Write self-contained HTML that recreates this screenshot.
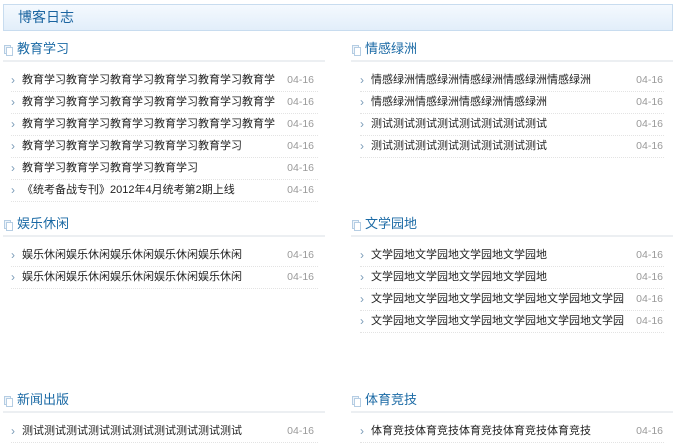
<!DOCTYPE html>
<html><head><meta charset="utf-8"><style>
*{margin:0;padding:0;box-sizing:border-box}
body{width:677px;height:442px;overflow:hidden;background:#fff;font-family:"Liberation Sans","Noto Sans CJK SC",sans-serif;position:relative}
.hd{position:absolute;left:3px;top:4px;width:670px;height:27px;border:1px solid #c8dcef;background:linear-gradient(#f4f9fe,#e2eefa);color:#1a64a0;font-size:14px;line-height:25px;padding-left:14px}
.sec{position:absolute}
.t{height:25px;border-bottom:2px solid #eceff2;font-size:13px;color:#1b6aa5;line-height:24px;padding-left:14px;position:relative}
.t:before{content:"";position:absolute;left:1px;top:8px;width:5px;height:7px;border:1px solid #b5cde3;background:#eef4fa}
.t:after{content:"";position:absolute;left:3px;top:10px;width:5px;height:7px;border:1px solid #b5cde3;background:#fff}
ul{list-style:none;margin-top:8px}
li{height:22px;line-height:21px;font-size:11px;color:#222;border-bottom:1px dotted #e3e3e3;position:relative;padding-left:11px;white-space:nowrap}
li:before{content:"›";position:absolute;left:0;top:0;color:#7a9bb8;font-size:12px}
li b{font-weight:normal;display:block;width:256px;overflow:hidden}
li span{position:absolute;right:4px;top:0;color:#999;font-size:10.5px}
.L{left:3px;width:322px}.L ul{margin-left:8px;width:307px}
.R{left:351px;width:322px}.R ul{margin-left:9px;width:304px}
.R li span{right:1px}
</style></head><body>
<div class="hd">博客日志</div>

<div class="sec L" style="top:37px"><div class="t">教育学习</div><ul>
<li><b>教育学习教育学习教育学习教育学习教育学习教育学</b><span>04-16</span></li>
<li><b>教育学习教育学习教育学习教育学习教育学习教育学</b><span>04-16</span></li>
<li><b>教育学习教育学习教育学习教育学习教育学习教育学</b><span>04-16</span></li>
<li><b>教育学习教育学习教育学习教育学习教育学习</b><span>04-16</span></li>
<li><b>教育学习教育学习教育学习教育学习</b><span>04-16</span></li>
<li><b>《统考备战专刊》2012年4月统考第2期上线</b><span>04-16</span></li>
</ul></div>

<div class="sec R" style="top:37px"><div class="t">情感绿洲</div><ul>
<li><b>情感绿洲情感绿洲情感绿洲情感绿洲情感绿洲</b><span>04-16</span></li>
<li><b>情感绿洲情感绿洲情感绿洲情感绿洲</b><span>04-16</span></li>
<li><b>测试测试测试测试测试测试测试测试</b><span>04-16</span></li>
<li><b>测试测试测试测试测试测试测试测试</b><span>04-16</span></li>
</ul></div>

<div class="sec L" style="top:212px"><div class="t">娱乐休闲</div><ul>
<li><b>娱乐休闲娱乐休闲娱乐休闲娱乐休闲娱乐休闲</b><span>04-16</span></li>
<li><b>娱乐休闲娱乐休闲娱乐休闲娱乐休闲娱乐休闲</b><span>04-16</span></li>
</ul></div>

<div class="sec R" style="top:212px"><div class="t">文学园地</div><ul>
<li><b>文学园地文学园地文学园地文学园地</b><span>04-16</span></li>
<li><b>文学园地文学园地文学园地文学园地</b><span>04-16</span></li>
<li><b>文学园地文学园地文学园地文学园地文学园地文学园</b><span>04-16</span></li>
<li><b>文学园地文学园地文学园地文学园地文学园地文学园</b><span>04-16</span></li>
</ul></div>

<div class="sec L" style="top:388px"><div class="t">新闻出版</div><ul>
<li><b>测试测试测试测试测试测试测试测试测试测试</b><span>04-16</span></li>
</ul></div>

<div class="sec R" style="top:388px"><div class="t">体育竞技</div><ul>
<li><b>体育竞技体育竞技体育竞技体育竞技体育竞技</b><span>04-16</span></li>
</ul></div>
</body></html>
